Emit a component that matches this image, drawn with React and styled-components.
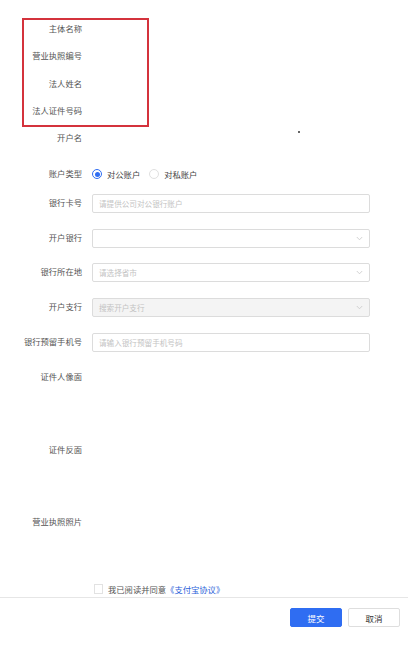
import React from "react";
import styled, { createGlobalStyle } from "styled-components";

const Global = createGlobalStyle`
  html, body {
    margin: 0;
    padding: 0;
    background: #fff;
  }
  body {
    font-family: "Liberation Sans", "Noto Sans CJK SC", sans-serif;
    color: #333;
  }
`;

const Page = styled.div`
  width: 408px;
  height: 650px;
  position: relative;
  overflow: hidden;
  background: #fff;
`;

const Form = styled.div`
  display: flex;
  flex-direction: column;
  padding-top: 19.5px;
`;

const Row = styled.div`
  display: flex;
  align-items: ${(p) => (p.$top ? "flex-start" : "center")};
  height: ${(p) => p.$h || 19}px;
  margin-top: ${(p) => p.$mt || 0}px;
`;

const Label = styled.div`
  width: 82px;
  flex-shrink: 0;
  text-align: right;
  font-size: 8.3px;
  line-height: 19px;
  color: #555;
  white-space: nowrap;
`;

const Field = styled.div`
  margin-left: 10px;
  width: 278px;
  display: flex;
  align-items: center;
`;

const Input = styled.div`
  box-sizing: border-box;
  width: 100%;
  height: 19px;
  border: 1px solid #dcdcdc;
  border-radius: 2px;
  background: ${(p) => (p.$disabled ? "#f4f4f4" : "#fff")};
  display: flex;
  align-items: center;
  justify-content: space-between;
  padding: 0 6px;
  font-size: 7.6px;
  color: #c3c3c3;
`;

const Chevron = () => (
  <svg width="7" height="5" viewBox="0 0 7 5">
    <path d="M0.8 1 L3.5 3.8 L6.2 1" fill="none" stroke="#c8c8c8" strokeWidth="0.8" />
  </svg>
);

const Radio = styled.span`
  box-sizing: border-box;
  width: 10px;
  height: 10px;
  border-radius: 50%;
  border: 1px solid ${(p) => (p.$on ? "#2f6df2" : "#e0e0e0")};
  display: inline-flex;
  align-items: center;
  justify-content: center;
  margin-right: 5px;

  &::after {
    content: "";
    width: 5px;
    height: 5px;
    border-radius: 50%;
    background: ${(p) => (p.$on ? "#2f6df2" : "transparent")};
  }
`;

const RadioText = styled.span`
  font-size: 8.3px;
  color: #444;
  margin-right: 9px;
`;

const Highlight = styled.div`
  position: absolute;
  left: 22px;
  top: 18px;
  width: 127px;
  height: 109px;
  box-sizing: border-box;
  border: 2px solid #d4323c;
  pointer-events: none;
`;

const Dot = styled.span`
  position: absolute;
  left: 298px;
  top: 131px;
  width: 2px;
  height: 2px;
  background: #666;
`;

const Agree = styled.div`
  display: flex;
  align-items: center;
  margin-top: 10.5px;
  padding-left: 94px;
  height: 12px;
  font-size: 8.3px;
  color: #555;
`;

const Check = styled.span`
  box-sizing: border-box;
  width: 9px;
  height: 10px;
  border: 1px solid #e2e2e2;
  margin-right: 5px;
`;

const Link = styled.span`
  color: #2b5fd9;
`;

const Footer = styled.div`
  margin-top: 2px;
  border-top: 1px solid #e6e6e6;
  display: flex;
  justify-content: flex-end;
  gap: 6px;
  padding: 10px 8px 0 0;
`;

const Button = styled.button`
  width: 52px;
  height: 19px;
  border-radius: 2px;
  font-size: 8.5px;
  font-family: inherit;
  padding: 0;
  border: 1px solid ${(p) => (p.$primary ? "#2f6df2" : "#dedede")};
  background: ${(p) => (p.$primary ? "#2f6df2" : "#fff")};
  color: ${(p) => (p.$primary ? "#fff" : "#333")};
`;

const plainRows = [
  { label: "主体名称", mt: 0 },
  { label: "营业执照编号", mt: 8 },
  { label: "法人姓名", mt: 9 },
  { label: "法人证件号码", mt: 8 },
  { label: "开户名", mt: 8 },
];

export default function App() {
  return (
    <Page>
      <Global />
      <Form>
        {plainRows.map((r) => (
          <Row key={r.label} $mt={r.mt}>
            <Label>{r.label}</Label>
          </Row>
        ))}
        <Row $mt={17}>
          <Label>账户类型</Label>
          <Field>
            <Radio $on />
            <RadioText>对公账户</RadioText>
            <Radio />
            <RadioText>对私账户</RadioText>
          </Field>
        </Row>
        <Row $mt={10.5}>
          <Label>银行卡号</Label>
          <Field>
            <Input>请提供公司对公银行账户</Input>
          </Field>
        </Row>
        <Row $mt={15.5}>
          <Label>开户银行</Label>
          <Field>
            <Input>
              <span />
              <Chevron />
            </Input>
          </Field>
        </Row>
        <Row $mt={15.5}>
          <Label>银行所在地</Label>
          <Field>
            <Input>
              请选择省市
              <Chevron />
            </Input>
          </Field>
        </Row>
        <Row $mt={15.5}>
          <Label>开户支行</Label>
          <Field>
            <Input $disabled>
              搜索开户支行
              <Chevron />
            </Input>
          </Field>
        </Row>
        <Row $mt={16}>
          <Label>银行预留手机号</Label>
          <Field>
            <Input>请输入银行预留手机号码</Input>
          </Field>
        </Row>
        <Row $top $h={73} $mt={16}>
          <Label>证件人像面</Label>
        </Row>
        <Row $top $h={72}>
          <Label>证件反面</Label>
        </Row>
        <Row $top $h={60}>
          <Label>营业执照照片</Label>
        </Row>
        <Agree>
          <Check />
          我已阅读并同意
          <Link>《支付宝协议》</Link>
        </Agree>
        <Footer>
          <Button $primary>提交</Button>
          <Button>取消</Button>
        </Footer>
      </Form>
      <Highlight />
      <Dot />
    </Page>
  );
}
